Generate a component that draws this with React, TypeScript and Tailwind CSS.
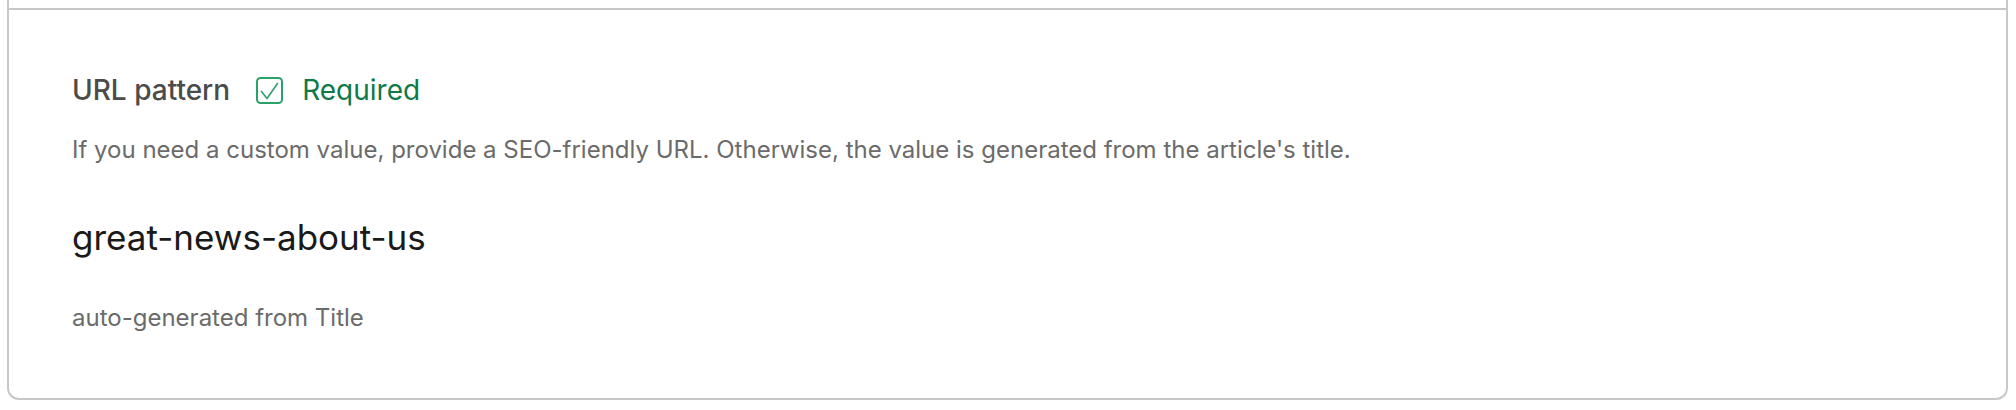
const CheckedBox = () => (
  <svg width="27" height="27" viewBox="0 0 27 27" fill="none" className="ml-[26px]">
    <rect x="1" y="1" width="25" height="25" rx="3.5" stroke="#2aa06a" strokeWidth="2" />
    <path d="M5.5 14.5 11 21.5 21.5 6.5" stroke="#2aa06a" strokeWidth="1.6" strokeLinecap="round" strokeLinejoin="round" />
  </svg>
);

const App = () => {
  return (
    <div className="w-[2016px] h-[410px] bg-white px-[7px] pr-[8px] font-['Inter',sans-serif]">
      <div className="border-x-2 border-b-2 border-[#c8c8c8] rounded-b-[12px]">
        {/* tail of the previous section */}
        <div className="h-[8px]"></div>
        <section className="border-t-2 border-[#c8c8c8] pl-[63px] pt-[63px] pb-[64px]">
          <div className="flex items-center h-[34px]">
            <span className="text-[28px] font-medium text-[#4b4b4b]">URL pattern</span>
            <CheckedBox />
            <span className="ml-[19px] text-[28px] text-[#0f7a48]">Required</span>
          </div>
          <p className="mt-[27px] text-[24px] leading-[32px] text-[#6b6b6b]">
            If you need a custom value, provide a SEO-friendly URL. Otherwise, the value is generated from the article's title.
          </p>
          <div className="mt-[49px] text-[35px] leading-[44px] text-[#1a1a1a]">great-news-about-us</div>
          <div className="mt-[43px] text-[24px] leading-[32px] text-[#6b6b6b]">auto-generated from Title</div>
        </section>
      </div>
    </div>
  );
};

export default App;
